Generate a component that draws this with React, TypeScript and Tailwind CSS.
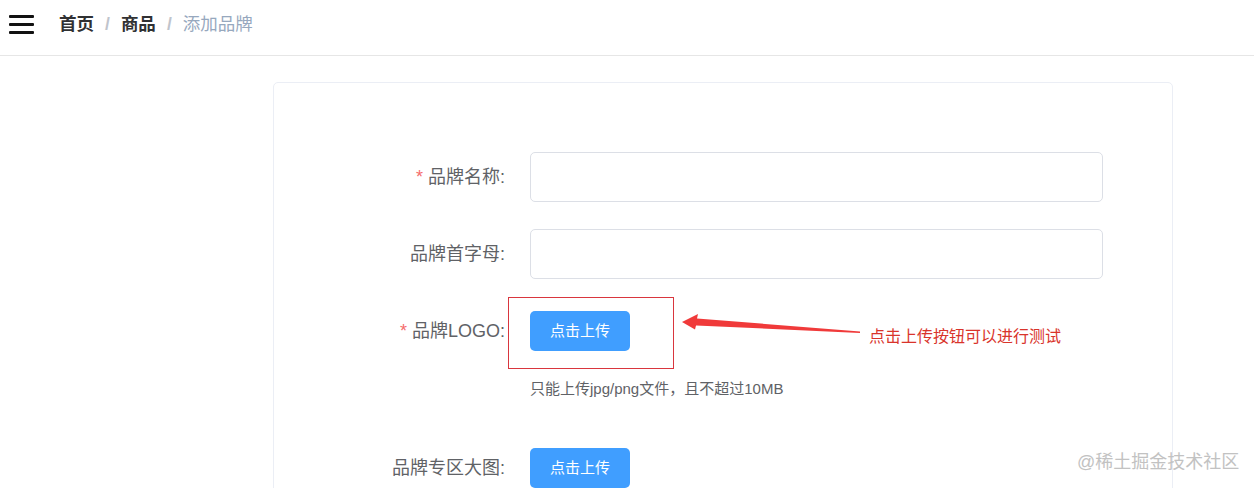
import React from 'react';

const FONT = '"Liberation Sans", "Noto Sans CJK SC", sans-serif';

const crumbs = [
  { label: '首页', link: true },
  { label: '商品', link: true },
  { label: '添加品牌', link: false },
];

const Hamburger = () => (
  <svg width="25" height="19" viewBox="0 0 25 19" className="block">
    <rect x="0" y="0" width="25" height="3" rx="1" fill="#111" />
    <rect x="0" y="8" width="25" height="3" rx="1" fill="#111" />
    <rect x="0" y="16" width="25" height="3" rx="1" fill="#111" />
  </svg>
);

const FormLabel: React.FC<{ text: string; required?: boolean }> = ({ text, required }) => (
  <div className="w-[160px] shrink-0 pr-[25px] text-right text-[18px] leading-[50px] text-[#606266]">
    {required && <span className="mr-[5px] text-[#f56c6c]">*</span>}
    {text}:
  </div>
);

const UploadButton = () => (
  <button className="h-[40px] w-[100px] rounded-[5px] bg-[#409eff] text-[15px] text-white">
    点击上传
  </button>
);

export default function App() {
  return (
    <div className="relative h-[488px] overflow-hidden bg-white" style={{ fontFamily: FONT }}>
      {/* top navbar */}
      <div className="flex h-[56px] items-center border-b border-[#e6e6e6] pb-[7px] pl-[9px]">
        <Hamburger />
        <div className="ml-[25px] flex items-center text-[17.5px]">
          {crumbs.map((c, i) => (
            <React.Fragment key={c.label}>
              {i > 0 && <span className="mx-[11px] font-bold text-[#c0c4cc]">/</span>}
              <span className={c.link ? 'font-bold text-[#303133]' : 'text-[#97a8be]'}>{c.label}</span>
            </React.Fragment>
          ))}
        </div>
      </div>

      {/* form card */}
      <div className="ml-[273px] mt-[26px] h-[600px] w-[900px] rounded-[5px] border border-[#ebeef5] bg-white pl-[96px] pt-[69px]">
        <div className="mb-[27px] flex">
          <FormLabel text="品牌名称" required />
          <input className="h-[50px] w-[573px] rounded-[5px] border border-[#dcdfe6] px-[15px] outline-none" />
        </div>
        <div className="mb-[27px] flex">
          <FormLabel text="品牌首字母" />
          <input className="h-[50px] w-[573px] rounded-[5px] border border-[#dcdfe6] px-[15px] outline-none" />
        </div>
        <div className="mb-[44px] flex">
          <FormLabel text="品牌LOGO" required />
          <div className="flex flex-col">
            <div className="flex h-[50px] items-center">
              <UploadButton />
            </div>
            <div className="mt-[23px] text-[15px] leading-[20px] text-[#606266]">
              只能上传jpg/png文件，且不超过10MB
            </div>
          </div>
        </div>
        <div className="flex">
          <FormLabel text="品牌专区大图" />
          <div className="flex h-[50px] items-center">
            <UploadButton />
          </div>
        </div>
      </div>

      {/* annotation overlay */}
      <div className="pointer-events-none absolute left-[508px] top-[297px] h-[72px] w-[166px] border border-[#d9363e]" />
      <svg className="pointer-events-none absolute left-0 top-0" width="1254" height="488">
        <polygon
          points="682,322 698,314 697,318.5 860,331.5 860,333 696,325.5 695,329.5"
          fill="#f03a3a"
        />
      </svg>
      <div className="absolute left-[869px] top-[326px] text-[16px] leading-[22px] text-[#d9342b]">
        点击上传按钮可以进行测试
      </div>

      {/* watermark */}
      <div className="absolute left-[1077px] top-[450px] text-[18px] leading-[24px] text-[#c2c2c2]">
        @稀土掘金技术社区
      </div>
    </div>
  );
}
